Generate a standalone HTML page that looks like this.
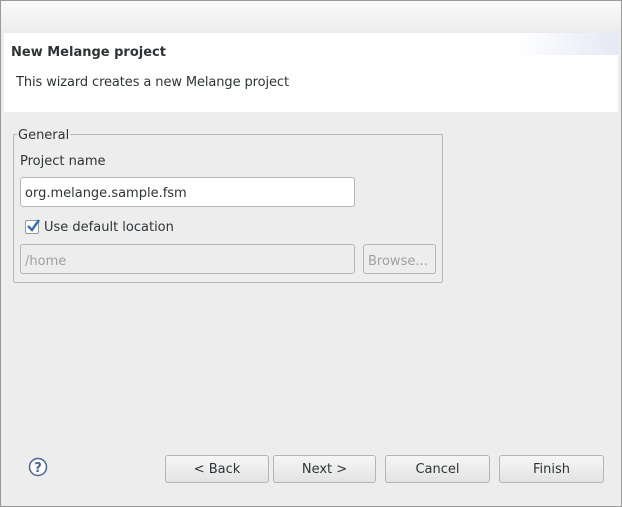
<!DOCTYPE html><html><head><style>
body{margin:0;width:622px;height:507px;overflow:hidden;font-family:"DejaVu Sans","Liberation Sans",sans-serif;font-size:13px;color:#2e3436}
.win{position:absolute;left:0;top:0;width:620px;height:505px;border:1px solid #9a9a9a;background:#ededed}
.top{position:absolute;left:0;top:0;width:620px;height:32px;background:linear-gradient(#fafafa,#ececec)}
.ban{position:absolute;left:3px;top:32px;width:614px;height:79px;background:#fff}
.grad{position:absolute;right:0;top:0;width:140px;height:22px;background:linear-gradient(100deg,#fff 30%,#e4e8f5 100%)}
.a{position:absolute;white-space:nowrap}
.grp{position:absolute;left:12px;top:133px;width:428px;height:147px;border:1px solid #b8b8b8;border-radius:2px}
.inp{position:absolute;border:1px solid #b5b5b5;border-radius:3px;background:#fff;box-sizing:border-box}
.btn{position:absolute;top:454px;height:28px;border:1px solid #b5b5b5;border-radius:3px;background:linear-gradient(#f6f6f6,#e3e3e3);box-sizing:border-box;text-align:center;line-height:27px;font-size:13px}
</style></head><body><div class="win">
<div class="top"></div>
<div class="ban"><div class="grad"></div></div>
<div class="a" style="left:10px;top:44px;font-weight:bold;font-size:13px">New Melange project</div>
<div class="a" style="left:15px;top:74px;letter-spacing:-0.1px">This wizard creates a new Melange project</div>
<div class="grp"></div>
<div class="a" style="left:16px;top:127px;background:#ededed;padding:0 1px">General</div>
<div class="a" style="left:19px;top:153px">Project name</div>
<div class="inp" style="left:19px;top:176px;width:335px;height:30px"></div>
<div class="a" style="left:24px;top:185px">org.melange.sample.fsm</div>
<div class="a" style="left:24px;top:219px;width:12px;height:12px;border:1px solid #999;background:#fff;border-radius:2px"></div>
<svg class="a" style="left:24px;top:217px" width="16" height="16"><path d="M3 8 L7 12 L14 2" stroke="#3a6fb8" stroke-width="2.5" fill="none"/></svg>
<div class="a" style="left:43px;top:219px">Use default location</div>
<div class="inp" style="left:19px;top:243px;width:335px;height:30px;background:#ededed"></div>
<div class="a" style="left:24px;top:253px;color:#a0a0a0">/home</div>
<div class="inp" style="left:362px;top:243px;width:73px;height:30px;background:#ededed"></div>
<div class="a" style="left:367px;top:253px;color:#a0a0a0">Browse...</div>
<svg class="a" style="left:26px;top:455px" width="22" height="22"><circle cx="11" cy="11" r="8.5" fill="#fff" stroke="#4a6494" stroke-width="1.5"/><text x="11" y="16" text-anchor="middle" font-size="13" font-weight="bold" fill="#4a6494" font-family="DejaVu Sans">?</text></svg>
<div class="btn" style="left:164px;width:104px">&lt; Back</div>
<div class="btn" style="left:272px;width:103px">Next &gt;</div>
<div class="btn" style="left:384px;width:105px">Cancel</div>
<div class="btn" style="left:498px;width:105px">Finish</div>
</div></body></html>
